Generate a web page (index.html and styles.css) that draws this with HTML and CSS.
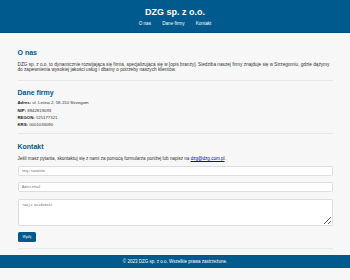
FILE: index.html
```html
<!DOCTYPE html>
<html lang="pl">
<head>
    <meta charset="UTF-8">
    <meta name="viewport" content="width=device-width, initial-scale=1.0">
    <title>DZG sp. z o.o.</title>
    <link rel="stylesheet" href="styles.css">
</head>
<body>
    <header class="site-header">
        <h1>DZG sp. z o.o.</h1>
        <nav class="nav">
            <a href="#onas">O nas</a>
            <a href="#dane">Dane firmy</a>
            <a href="#kontakt">Kontakt</a>
        </nav>
    </header>

    <main class="content">
        <section id="onas" class="section section-about">
            <h2>O nas</h2>
            <p>DZG sp. z o.o. to dynamicznie rozwijająca się firma, specjalizująca się w [opis branży]. Siedziba naszej firmy znajduje się w Strzegomiu, gdzie dążymy do zapewnienia wysokiej jakości usług i dbamy o potrzeby naszych klientów.</p>
        </section>

        <section id="dane" class="section section-data">
            <h2>Dane firmy</h2>
            <ul class="details">
                <li><strong>Adres:</strong> ul. Leśna 2, 58-150 Strzegom</li>
                <li><strong>NIP:</strong> 8842819093</li>
                <li><strong>REGON:</strong> 525177321</li>
                <li><strong>KRS:</strong> 0001033090</li>
            </ul>
        </section>

        <section id="kontakt" class="section section-contact">
            <h2>Kontakt</h2>
            <p>Jeśli masz pytania, skontaktuj się z nami za pomocą formularza poniżej lub napisz na <a href="mailto:dzg@dzg.com.pl">dzg@dzg.com.pl</a>.</p>
            <form class="contact-form">
                <input type="text" placeholder="Imię i nazwisko">
                <input type="email" placeholder="Adres email">
                <textarea placeholder="Twoja wiadomość"></textarea>
                <button type="submit">Wyślij</button>
            </form>
        </section>
    </main>

    <footer class="site-footer">
        <p>&copy; 2023 DZG sp. z o.o. Wszelkie prawa zastrzeżone.</p>
    </footer>
</body>
</html>
```

FILE: styles.css
```css
body {
    font-family: 'Liberation Sans', Arial, sans-serif;
    background-color: #f7f7f7;
    color: #333;
    margin: 0;
    padding: 0;
}

.site-header {
    background-color: #005a8d;
    color: #fff;
    text-align: center;
    padding: 7px 0 5px;
    border-bottom: 1px solid #004c78;
}

.site-header h1 {
    margin: 0;
    font-size: 9px;
    line-height: 11px;
}

.nav {
    margin-top: 3px;
    line-height: 6px;
    font-size: 4.6px;
}

.nav a {
    color: #fff;
    text-decoration: none;
    margin: 0 5px;
}

.content {
    padding: 0 17.5px;
}

.section {
    border-bottom: 1px solid #e8e8e8;
}

.section h2 {
    margin: 0;
    font-size: 7px;
    line-height: 9px;
    color: #005a8d;
}

.section p {
    margin: 0;
    font-size: 4.7px;
    line-height: 5px;
}

.section-about {
    padding: 14.5px 0 8px;
}

.section-about h2 {
    margin-bottom: 5.5px;
}

.section-data {
    padding: 6.5px 0 5px;
}

.details {
    list-style: none;
    margin: 2.8px 0 0;
    padding: 0;
    font-size: 4.3px;
    line-height: 7.3px;
}

.details strong {
    color: #222;
}

.section-contact {
    padding: 8px 0 5.5px;
}

.section-contact h2 {
    margin-bottom: 5px;
}

.section-contact p {
    font-size: 4.55px;
}

.section-contact a {
    color: #0000ee;
}

.contact-form {
    display: flex;
    flex-direction: column;
    align-items: flex-start;
    margin-top: 4.2px;
}

.contact-form input,
.contact-form textarea {
    box-sizing: border-box;
    width: 100%;
    background: #fff;
    border: 1px solid #ddd;
    border-radius: 1.5px;
    padding: 0 3.5px;
    font-size: 3.4px;
    margin: 0 0 6.5px;
    appearance: none;
}

.contact-form input {
    height: 10px;
    font-family: 'Liberation Sans', Arial, sans-serif;
}

.contact-form textarea {
    height: 27.5px;
    padding-top: 3px;
    font-family: 'Liberation Mono', monospace;
    margin-bottom: 5.5px;
}

.contact-form button {
    height: 10.5px;
    padding: 0 5px;
    background-color: #005a8d;
    color: #fff;
    border: none;
    border-radius: 1.5px;
    font-size: 3.4px;
    font-family: 'Liberation Sans', Arial, sans-serif;
    cursor: pointer;
}

.site-footer {
    margin-top: 6.5px;
    background-color: #005a8d;
    color: #fff;
    text-align: center;
    height: 12.7px;
    display: flex;
    align-items: center;
    justify-content: center;
}

.site-footer p {
    margin: 0;
    font-size: 4.5px;
}
```
